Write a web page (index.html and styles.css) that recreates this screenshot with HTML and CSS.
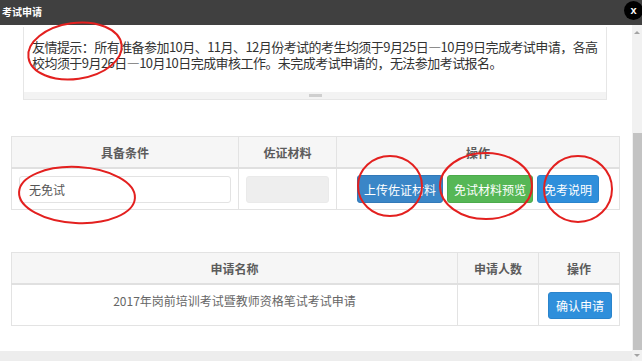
FILE: index.html
```html
<!DOCTYPE html>
<html lang="zh-CN">
<head>
    <meta charset="UTF-8">
    <title>考试申请</title>
    <link rel="stylesheet" href="styles.css">
</head>
<body>
<div class="dialog">
    <div class="dialog-title">考试申请</div>
    <span class="dialog-close">x</span>

    <div class="dialog-main">
        <div class="dialog-content">
            <div class="notice">
                <p>友情提示：所有准备参加10月、11月、12月份考试的考生均须于9月25日—10月9日完成考试申请，各高校均须于9月26日—10月10日完成审核工作。未完成考试申请的，无法参加考试报名。</p>
                <div class="notice-grip"><span></span></div>
            </div>

            <table class="grid grid-cond">
                <colgroup>
                    <col style="width:227px">
                    <col style="width:98px">
                    <col>
                </colgroup>
                <thead>
                    <tr><th>具备条件</th><th>佐证材料</th><th>操作</th></tr>
                </thead>
                <tbody>
                    <tr>
                        <td><input class="field" value="无免试" readonly></td>
                        <td><input class="field field-off" disabled></td>
                        <td class="ops">
                            <button class="btn btn-primary">上传佐证材料</button>
                            <button class="btn btn-success">免试材料预览</button>
                            <button class="btn btn-info">免考说明</button>
                        </td>
                    </tr>
                </tbody>
            </table>

            <table class="grid grid-apply">
                <colgroup>
                    <col>
                    <col style="width:81px">
                    <col style="width:81px">
                </colgroup>
                <thead>
                    <tr><th>申请名称</th><th>申请人数</th><th>操作</th></tr>
                </thead>
                <tbody>
                    <tr>
                        <td>2017年岗前培训考试暨教师资格笔试考试申请</td>
                        <td></td>
                        <td class="ops"><button class="btn btn-info">确认申请</button></td>
                    </tr>
                </tbody>
            </table>

            <div class="dialog-foot"></div>
        </div>

        <div class="scrollbar">
            <span class="arrow arrow-up"></span>
            <div class="thumb"></div>
            <span class="arrow arrow-down"></span>
        </div>
    </div>

    <!-- hand-drawn annotation marks -->
    <svg class="marks" width="642" height="361" viewBox="0 0 642 361">
        <ellipse cx="75" cy="51" rx="47" ry="28" transform="rotate(-8 75 51)"/>
        <ellipse cx="77" cy="195" rx="58" ry="28" transform="rotate(3 77 195)"/>
        <ellipse cx="390" cy="186" rx="32" ry="30"/>
        <ellipse cx="486" cy="186" rx="46" ry="33"/>
        <ellipse cx="578" cy="189" rx="34" ry="33"/>
    </svg>
</div>
</body>
</html>
```

FILE: styles.css
```css
body {
    margin: 0;
    font-family: "Noto Sans CJK SC", "Liberation Sans", sans-serif;
    background: #fff;
    overflow: hidden;
}

.dialog {
    position: relative;
    width: 642px;
    height: 361px;
    display: flex;
    flex-direction: column;
}

.dialog-title {
    height: 25px;
    line-height: 23px;
    padding-left: 2px;
    background: #404040;
    color: #fff;
    font-size: 10px;
    font-weight: bold;
}

.dialog-close {
    position: absolute;
    top: 1px;
    left: 624px;
    width: 19px;
    height: 19px;
    border-radius: 50%;
    background: #000;
    color: #fff;
    font-family: "Liberation Sans", sans-serif;
    font-size: 11px;
    font-weight: bold;
    line-height: 18px;
    text-align: center;
}

.dialog-main {
    flex: 1;
    display: flex;
}

.dialog-content {
    flex: 1;
    display: flex;
    flex-direction: column;
}

/* notice */
.notice {
    margin: 2px 25px 0 23px;
    border: 1px solid #e6e6e6;
    border-top: none;
}

.notice p {
    margin: 0;
    padding: 12px 6px 19px 8px;
    font-size: 13px;
    letter-spacing: -0.55px;
    line-height: 16px;
    color: #333;
    height: 34px;
}

.notice-grip {
    height: 7px;
    background: #f3f3f3;
    display: flex;
    justify-content: center;
    align-items: center;
}

.notice-grip span {
    width: 13px;
    height: 3px;
    background: #cfcfcf;
}

/* tables */
.grid {
    border-collapse: collapse;
    table-layout: fixed;
    margin-left: 11px;
    width: 609px;
    font-size: 12px;
}

.grid th,
.grid td {
    border: 1px solid #e3e3e3;
}

.grid th {
    height: 30px;
    padding: 0;
    background: #f6f6f6;
    border-bottom: 2px solid #e0e0e0;
    color: #5c5c5c;
    font-weight: bold;
    line-height: 17px;
}

.grid td {
    padding: 6px 7px;
    color: #666;
    line-height: 17px;
}

.grid-cond {
    margin-top: 36px;
}

.grid-cond td {
    height: 27px;
}

.grid-apply {
    margin-top: 42px;
}

.grid-apply td {
    height: 26px;
    vertical-align: top;
    padding-top: 7px;
    text-align: center;
}

.field {
    box-sizing: border-box;
    width: 100%;
    height: 27px;
    margin: 0;
    padding: 0 9px;
    border: 1px solid #e3e3e3;
    border-radius: 3px;
    background: #fff;
    color: #555;
    font-family: inherit;
    font-size: 12px;
    outline: none;
}

.field-off {
    background: #eee;
    border-color: #eaeaea;
}

.ops {
    text-align: center;
    white-space: nowrap;
    font-size: 0;
}

.btn {
    height: 28px;
    margin: 0 2px;
    padding: 0 6px;
    border: 1px solid transparent;
    border-radius: 3px;
    color: #fff;
    font-family: inherit;
    font-size: 12px;
    vertical-align: top;
}

.btn-primary {
    background: #3a86c7;
    border-color: #3279b8;
}

.btn-success {
    background: #56b756;
    border-color: #4cab4c;
}

.btn-info {
    background: #2f8fdb;
    border-color: #2a84cc;
}

.grid-apply .btn {
    height: 27px;
    padding: 0 7px;
}

.dialog-foot {
    margin-top: auto;
    height: 10px;
    background: #ededed;
}

/* fake scrollbar */
.scrollbar {
    width: 10px;
    background: #f1f1f1;
    display: flex;
    flex-direction: column;
    align-items: center;
    padding-top: 2px;
}

.arrow {
    width: 0;
    height: 0;
    border-left: 3px solid transparent;
    border-right: 3px solid transparent;
    margin: 4px 0;
}

.arrow-up {
    border-bottom: 3px solid #a3a3a3;
}

.arrow-down {
    border-top: 3px solid #a3a3a3;
}

.thumb {
    margin-top: 95px;
    width: 9px;
    margin-left: 1px;
    flex: 1;
    background: #c3c3c3;
}

/* annotation overlay */
.marks {
    position: absolute;
    top: 0;
    left: 0;
    pointer-events: none;
}

.marks ellipse {
    fill: none;
    stroke: #e3201f;
    stroke-width: 2;
}
```
